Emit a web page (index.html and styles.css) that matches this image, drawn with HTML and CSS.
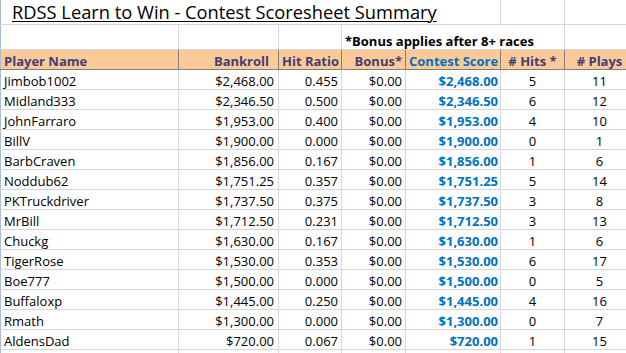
FILE: index.html
```html
<!DOCTYPE html>
<html>
<head>
<meta charset="utf-8">
<link rel="stylesheet" href="styles.css">
</head>
<body>
<table class="sheet">
  <colgroup>
    <col class="c-a"><col class="c-b"><col class="c-c"><col class="c-d"><col class="c-e"><col class="c-f"><col class="c-g">
  </colgroup>
  <tr class="r-title">
    <td colspan="5" class="title"><span>RDSS Learn to Win - Contest Scoresheet Summary</span></td>
    <td></td><td></td>
  </tr>
  <tr class="r-note">
    <td></td><td></td><td></td>
    <td colspan="3" class="note">*Bonus applies after 8+ races</td>
    <td></td>
  </tr>
  <tr class="r-head">
    <th class="left">Player Name</th>
    <th class="right pad-bank">Bankroll</th>
    <th class="right">Hit Ratio</th>
    <th class="right">Bonus*</th>
    <th class="left score-h">Contest Score</th>
    <th class="center"># Hits *</th>
    <th class="center"># Plays</th>
  </tr>
  <tr><td>Jimbob1002</td><td class="money">$2,468.00</td><td class="num">0.455</td><td class="num">$0.00</td><td class="score">$2,468.00</td><td class="center">5</td><td class="center">11</td></tr>
  <tr><td>Midland333</td><td class="money">$2,346.50</td><td class="num">0.500</td><td class="num">$0.00</td><td class="score">$2,346.50</td><td class="center">6</td><td class="center">12</td></tr>
  <tr><td>JohnFarraro</td><td class="money">$1,953.00</td><td class="num">0.400</td><td class="num">$0.00</td><td class="score">$1,953.00</td><td class="center">4</td><td class="center">10</td></tr>
  <tr><td>BillV</td><td class="money">$1,900.00</td><td class="num">0.000</td><td class="num">$0.00</td><td class="score">$1,900.00</td><td class="center">0</td><td class="center">1</td></tr>
  <tr><td>BarbCraven</td><td class="money">$1,856.00</td><td class="num">0.167</td><td class="num">$0.00</td><td class="score">$1,856.00</td><td class="center">1</td><td class="center">6</td></tr>
  <tr><td>Noddub62</td><td class="money">$1,751.25</td><td class="num">0.357</td><td class="num">$0.00</td><td class="score">$1,751.25</td><td class="center">5</td><td class="center">14</td></tr>
  <tr><td>PKTruckdriver</td><td class="money">$1,737.50</td><td class="num">0.375</td><td class="num">$0.00</td><td class="score">$1,737.50</td><td class="center">3</td><td class="center">8</td></tr>
  <tr><td>MrBill</td><td class="money">$1,712.50</td><td class="num">0.231</td><td class="num">$0.00</td><td class="score">$1,712.50</td><td class="center">3</td><td class="center">13</td></tr>
  <tr><td>Chuckg</td><td class="money">$1,630.00</td><td class="num">0.167</td><td class="num">$0.00</td><td class="score">$1,630.00</td><td class="center">1</td><td class="center">6</td></tr>
  <tr><td>TigerRose</td><td class="money">$1,530.00</td><td class="num">0.353</td><td class="num">$0.00</td><td class="score">$1,530.00</td><td class="center">6</td><td class="center">17</td></tr>
  <tr><td>Boe777</td><td class="money">$1,500.00</td><td class="num">0.000</td><td class="num">$0.00</td><td class="score">$1,500.00</td><td class="center">0</td><td class="center">5</td></tr>
  <tr><td>Buffaloxp</td><td class="money">$1,445.00</td><td class="num">0.250</td><td class="num">$0.00</td><td class="score">$1,445.00</td><td class="center">4</td><td class="center">16</td></tr>
  <tr><td>Rmath</td><td class="money">$1,300.00</td><td class="num">0.000</td><td class="num">$0.00</td><td class="score">$1,300.00</td><td class="center">0</td><td class="center">7</td></tr>
  <tr><td>AldensDad</td><td class="money">$720.00</td><td class="num">0.067</td><td class="num">$0.00</td><td class="score">$720.00</td><td class="center">1</td><td class="center">15</td></tr>
  <tr><td></td><td></td><td></td><td></td><td></td><td></td><td></td></tr>
</table>
</body>
</html>
```
FILE: styles.css
```css
html, body {
  margin: 0;
  padding: 0;
  overflow: hidden;
  background: #ffffff;
}
body {
  width: 626px;
  height: 353px;
  font-family: "Open Sans", "Liberation Sans", sans-serif;
  font-size: 13px;
  color: #000;
}
.sheet {
  border-collapse: collapse;
  table-layout: fixed;
  width: 634px;
  border-left: 1px solid #a9bcd3;
}
.c-a { width: 178px; }
.c-b { width: 100px; }
.c-c { width: 63px; }
.c-d { width: 64px; }
.c-e { width: 95px; }
.c-f { width: 64px; }
.c-g { width: 70px; }

td, th {
  border: 1px solid #d4d8de;
  padding: 0 3px 0 3px;
  height: 19px;
  line-height: 16px;
  vertical-align: bottom;
  white-space: nowrap;
  overflow: visible;
}
.sheet td:first-child, .sheet th:first-child {
  border-left: 1px solid #a9bcd3;
}
.r-title td {
  border-top: none;
  height: 23px;
}
.title {
  padding: 1px 3px 0 11px;
  font-size: 18.3px;
  line-height: 22px;
  vertical-align: top;
}
.title span {
  text-decoration: underline;
  text-decoration-thickness: 1px;
  text-underline-offset: 2px;
}
.r-note td {
  height: 24px;
}
.note {
  font-weight: bold;
  text-align: left;
}
.r-head th {
  background: #fdca97;
  border: 1px solid #7f7f7f;
  color: #3f3f76;
  font-weight: bold;
}
.left { text-align: left; }
.right { text-align: right; }
.center { text-align: center; }
.pad-bank { padding-right: 9px; }
.score-h { color: #0070c0 !important; padding-left: 3px; }
.money { text-align: right; padding-right: 4px; }
.num { text-align: right; padding-right: 3px; }
.score {
  text-align: right;
  padding-right: 2px;
  color: #0070c0;
  font-weight: bold;
}
```
